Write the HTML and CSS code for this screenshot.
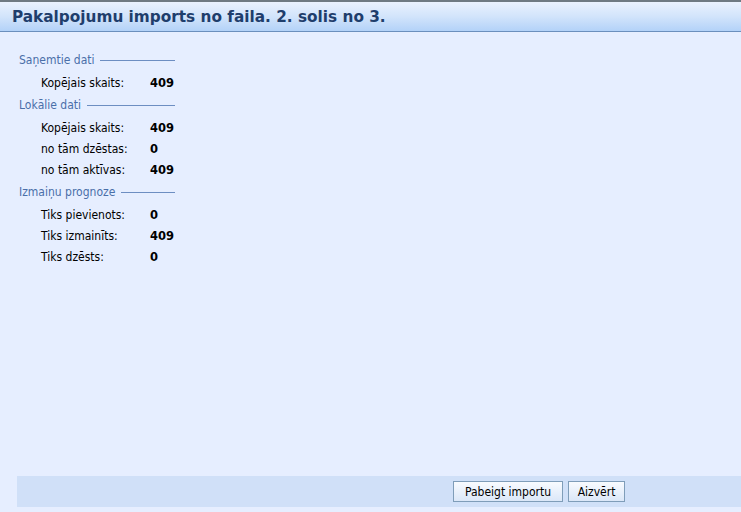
FILE: index.html
```html
<!DOCTYPE html>
<html>
<head>
<meta charset="utf-8">
<link rel="stylesheet" href="styles.css">
</head>
<body>
<div class="page">
  <div class="header"><h1 class="title">Pakalpojumu imports no faila. 2. solis no 3.</h1></div>
  <div class="content">
    <div class="section">
      <div class="legend"><span>Saņemtie dati</span><i class="rule"></i></div>
      <div class="row"><span class="label">Kopējais skaits:</span><span class="value">409</span></div>
    </div>
    <div class="section">
      <div class="legend"><span>Lokālie dati</span><i class="rule"></i></div>
      <div class="row"><span class="label">Kopējais skaits:</span><span class="value">409</span></div>
      <div class="row"><span class="label">no tām dzēstas:</span><span class="value">0</span></div>
      <div class="row"><span class="label">no tām aktīvas:</span><span class="value">409</span></div>
    </div>
    <div class="section">
      <div class="legend"><span>Izmaiņu prognoze</span><i class="rule"></i></div>
      <div class="row"><span class="label">Tiks pievienots:</span><span class="value">0</span></div>
      <div class="row"><span class="label">Tiks izmainīts:</span><span class="value">409</span></div>
      <div class="row"><span class="label">Tiks dzēsts:</span><span class="value">0</span></div>
    </div>
  </div>
  <div class="footer">
    <button class="btn btn-primary">Pabeigt importu</button>
    <button class="btn btn-close">Aizvērt</button>
  </div>
</div>
</body>
</html>
```
FILE: styles.css
```css
html, body {
  margin: 0;
  padding: 0;
  height: 100%;
  background: #e6eeff;
}
.page {
  height: 512px;
  display: flex;
  flex-direction: column;
  font-family: "DejaVu Sans Condensed", "DejaVu Sans", sans-serif;
  font-size: 12px;
  color: #000;
}
.header {
  height: 29px;
  border-top: 2px solid #6f7a82;
  border-bottom: 1px solid #6b8fbd;
  background: linear-gradient(to bottom, #eaf2fe 0%, #d2e4fb 50%, #b3d2f8 100%);
  display: flex;
  align-items: center;
  padding-left: 12px;
}
.title {
  margin: 0;
  font-family: "DejaVu Sans", sans-serif;
  font-weight: bold;
  font-size: 15.3px;
  color: #1f3e6c;
}
.content {
  flex: 1;
  padding: 16px 0 0 19px;
}
.legend {
  display: flex;
  align-items: center;
  height: 24px;
  width: 156px;
  color: #4a6fa9;
  font-size: 12px;
}
.legend span { flex: none; }
.rule {
  display: block;
  flex: 1;
  height: 1px;
  background: #6d8ec2;
  margin-left: 6px;
}
.row {
  display: flex;
  align-items: center;
  height: 21px;
  padding-left: 22px;
}
.label {
  width: 109px;
  flex: none;
}
.value {
  font-family: "DejaVu Sans", sans-serif;
  font-weight: bold;
  font-size: 11.5px;
}
.footer {
  margin: 0 0 5px 17px;
  height: 31px;
  background: #d0e0f8;
  display: flex;
  align-items: center;
  padding-left: 436px;
  gap: 5px;
}
.btn {
  font-family: "DejaVu Sans Condensed", "DejaVu Sans", sans-serif;
  font-size: 12px;
  color: #000;
  height: 21px;
  padding: 0;
  border: 1px solid #7f9db9;
  background: linear-gradient(to bottom, #f8fbff, #dbe7f8);
  border-radius: 0;
}
.btn-primary { width: 110px; }
.btn-close { width: 57px; }
```
